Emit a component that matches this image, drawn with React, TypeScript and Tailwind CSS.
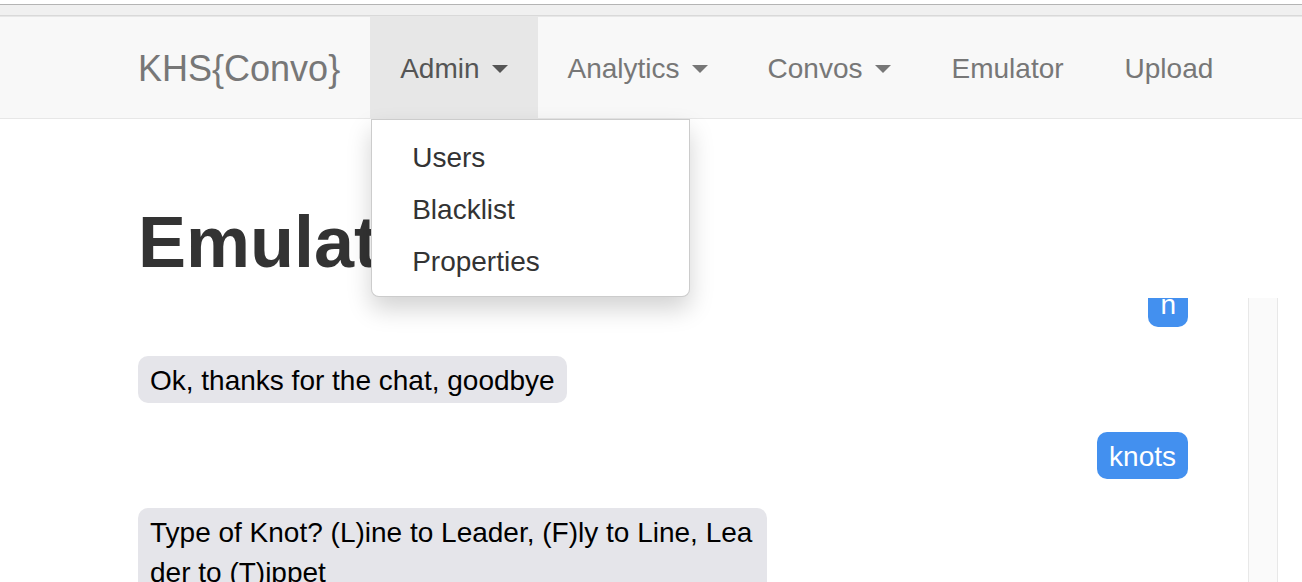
import React from "react";

function Caret() {
  return (
    <span className="inline-block w-0 h-0 ml-[12px] border-t-[8px] border-t-current border-x-[8px] border-x-transparent" />
  );
}

export default function App() {
  const font = { fontFamily: '"Liberation Sans", Arial, Helvetica, sans-serif' };
  const bubble = "rounded-[10px] px-[12px] pt-[5px] pb-[2px] text-[28px] leading-[40px]";
  return (
    <div className="w-[1302px] h-[582px] overflow-hidden bg-white flex flex-col" style={font}>
      <div className="h-[4px] bg-white shrink-0" />
      <div className="h-[1px] bg-[#b4b4b4] shrink-0" />
      <div className="h-[10px] bg-[#f0f0f0] shrink-0" />
      <div className="h-[1px] bg-[#d9d9d9] shrink-0" />
      <nav className="h-[103px] shrink-0 bg-[#f8f8f8] border-t border-b border-[#e7e7e7] flex items-stretch pl-[108px] relative z-20">
        <div className="px-[30px] pt-[2px] flex items-center text-[36px] leading-[40px] text-[#777]">KHS{"{"}Convo{"}"}</div>
        <div className="relative px-[30px] pt-[2px] flex items-center bg-[#e7e7e7] text-[#555] text-[28px] leading-[40px]">
          <span className="flex items-center">Admin<Caret /></span>
          <div className="absolute left-[1px] top-full mt-[1px] w-[319px] bg-white border border-[rgba(0,0,0,0.2)] rounded-b-[8px] pt-[12px] pb-[8px] shadow-[0_12px_24px_rgba(0,0,0,0.175)]">
            {["Users", "Blacklist", "Properties"].map((t) => (
              <div key={t} className="px-[40px] py-[6px] leading-[40px] text-[28px] text-[#333]">{t}</div>
            ))}
          </div>
        </div>
        <div className="px-[30px] pt-[2px] flex items-center text-[#777] text-[28px] leading-[40px]">
          <span className="flex items-center">Analytics<Caret /></span>
        </div>
        <div className="px-[30px] pt-[2px] flex items-center text-[#777] text-[28px] leading-[40px]">
          <span className="flex items-center">Convos<Caret /></span>
        </div>
        <div className="px-[31px] pt-[2px] flex items-center text-[#777] text-[28px] leading-[40px]">Emulator</div>
        <div className="px-[30px] pt-[2px] flex items-center text-[#777] text-[28px] leading-[40px]">Upload</div>
      </nav>
      <main className="flex-1 flex flex-col pl-[138px] pr-[24px] min-h-0">
        <h1 className="mt-[84px] mb-[16px] text-[72px] leading-[79px] font-bold text-[#333] shrink-0">Emulator</h1>
        <div className="flex-1 flex min-h-0">
          <div className="flex-1 overflow-hidden pr-[60px]">
            <div className="flex flex-col gap-[29px] -mt-[18px]">
              <div className={`self-end bg-[#4390ef] text-white ${bubble}`}>n</div>
              <div className={`self-start bg-[#e5e5ea] text-black ${bubble}`}>Ok, thanks for the chat, goodbye</div>
              <div className={`self-end bg-[#4390ef] text-white ${bubble}`}>knots</div>
              <div className={`self-start w-[629px] bg-[#e5e5ea] text-black whitespace-nowrap ${bubble}`}>
                Type of Knot? (L)ine to Leader, (F)ly to Line, Lea<br />der to (T)ippet
              </div>
            </div>
          </div>
          <div className="w-[30px] shrink-0 bg-[#fafafa] border-x border-[#e8e8e8]" />
        </div>
      </main>
    </div>
  );
}
